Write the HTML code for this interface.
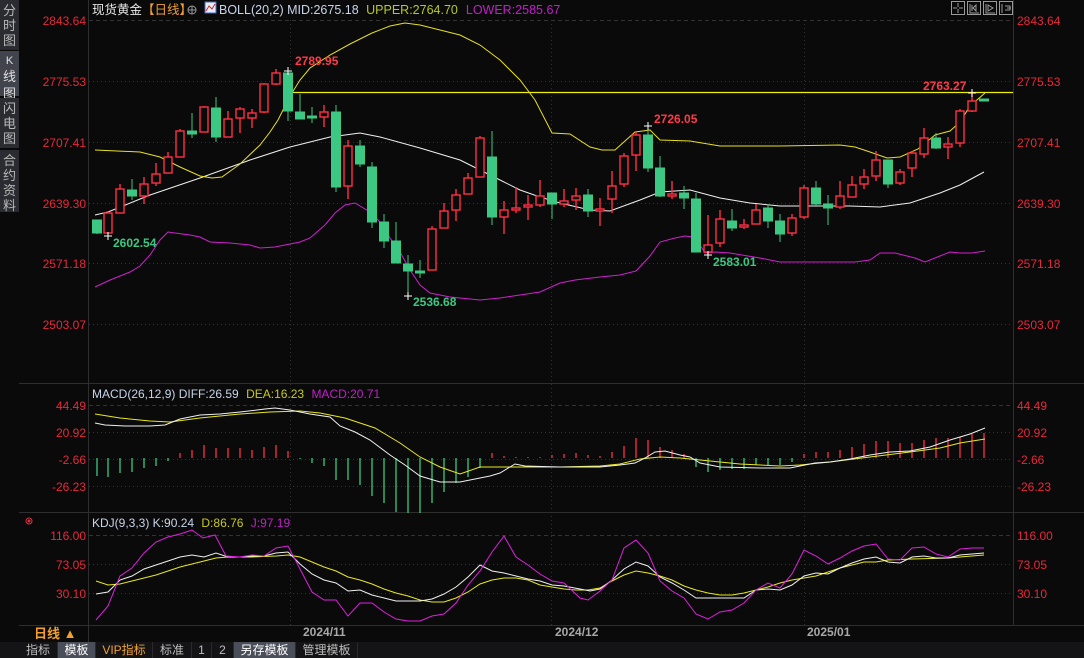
<!DOCTYPE html>
<html><head><meta charset="utf-8"><style>
*{margin:0;padding:0;box-sizing:border-box}
body{width:1084px;height:658px;background:#0a0a0a;overflow:hidden;font-family:"Liberation Sans","Noto Sans CJK SC",sans-serif;position:relative}
.side{position:absolute;left:0;top:0;width:19px;height:642px;background:#0a0a0a}
.side div{position:absolute;left:0;width:19px;background:#2a2c31;color:#b8b8b8;font-size:13px;line-height:15px;text-align:center;padding-top:3px}
.side div.sel{background:#41444c;color:#e0e0e0}
.tabs{position:absolute;left:0;top:642px;width:1084px;height:16px;background:#141416;font-size:12px;color:#bdbdbd}
.tabs span{position:absolute;top:0;height:16px;line-height:16px;text-align:center;border-right:1px solid #2a2a2a}
.tabs .s{background:#4a4e58;color:#fff}
svg{position:absolute;left:0;top:0}
</style></head><body>
<div class="side">
<div style="top:0;height:50px">分<br>时<br>图</div>
<div class="sel" style="top:51px;height:45px;font-size:11px">K<br><span style="font-size:13px">线<br>图</span></div>
<div style="top:98px;height:50px">闪<br>电<br>图</div>
<div style="top:150px;height:62px">合<br>约<br>资<br>料</div>
</div>
<svg width="1084" height="658" xmlns="http://www.w3.org/2000/svg" font-family="Liberation Sans, Noto Sans CJK SC, sans-serif">
<!-- frame lines -->
<g stroke="#2e2e2e" stroke-width="1">
<line x1="88.5" y1="0" x2="88.5" y2="642"/>
<line x1="1013.5" y1="0" x2="1013.5" y2="642"/>
<line x1="19" y1="383.5" x2="1084" y2="383.5"/>
<line x1="19" y1="512.5" x2="1084" y2="512.5"/>
<line x1="19" y1="625.5" x2="1084" y2="625.5"/>
</g>
<!-- grid -->
<g stroke="#333" stroke-width="1" stroke-dasharray="1,3">
<line x1="89" y1="20.5" x2="1013" y2="20.5" stroke-dasharray="4,3"/>
<line x1="89" y1="81.5" x2="1013" y2="81.5"/>
<line x1="89" y1="142.5" x2="1013" y2="142.5"/>
<line x1="89" y1="203.5" x2="1013" y2="203.5"/>
<line x1="89" y1="263.5" x2="1013" y2="263.5"/>
<line x1="89" y1="324.5" x2="1013" y2="324.5"/>
<line x1="89" y1="405.5" x2="1013" y2="405.5" stroke-dasharray="4,3"/>
<line x1="89" y1="432.5" x2="1013" y2="432.5"/>
<line x1="89" y1="459.5" x2="1013" y2="459.5"/>
<line x1="89" y1="486.5" x2="1013" y2="486.5"/>
<line x1="89" y1="535.5" x2="1013" y2="535.5" stroke-dasharray="4,3"/>
<line x1="89" y1="564.5" x2="1013" y2="564.5"/>
<line x1="89" y1="593.5" x2="1013" y2="593.5"/>
<line x1="290.5" y1="20" x2="290.5" y2="642"/>
<line x1="551.5" y1="20" x2="551.5" y2="642"/>
<line x1="804.5" y1="20" x2="804.5" y2="642"/>
</g>
<!-- axis labels -->
<g fill="#e8283a" font-size="12">
<g text-anchor="end">
<text x="86" y="25">2843.64</text><text x="86" y="86">2775.53</text><text x="86" y="147">2707.41</text><text x="86" y="208">2639.30</text><text x="86" y="268">2571.18</text><text x="86" y="329">2503.07</text>
<text x="86" y="410">44.49</text><text x="86" y="437">20.92</text><text x="86" y="464">-2.66</text><text x="86" y="491">-26.23</text>
<text x="86" y="540">116.00</text><text x="86" y="569">73.05</text><text x="86" y="598">30.10</text>
</g>
<text x="1017" y="25">2843.64</text><text x="1017" y="86">2775.53</text><text x="1017" y="147">2707.41</text><text x="1017" y="208">2639.30</text><text x="1017" y="268">2571.18</text><text x="1017" y="329">2503.07</text>
<text x="1017" y="410">44.49</text><text x="1017" y="437">20.92</text><text x="1017" y="464">-2.66</text><text x="1017" y="491">-26.23</text>
<text x="1017" y="540">116.00</text><text x="1017" y="569">73.05</text><text x="1017" y="598">30.10</text>
</g>
<!-- header -->
<text x="92" y="14" font-size="12.5"><tspan fill="#e8e8e8">现货黄金</tspan><tspan fill="#f0a030">【日线】</tspan></text>
<circle cx="192" cy="10" r="4" fill="none" stroke="#999"/><line x1="188" y1="10" x2="196" y2="10" stroke="#999"/><line x1="192" y1="6" x2="192" y2="14" stroke="#999"/>
<rect x="205" y="2" width="11" height="11" fill="#e8eef8" stroke="#4466cc"/><polyline points="206,11 209,6 212,9 215,4" fill="none" stroke="#d02020"/>
<text x="219" y="14" font-size="12.5"><tspan fill="#c8d4ea">BOLL(20,2) MID:2675.18 </tspan><tspan fill="#b8c820" dx="4">UPPER:2764.70</tspan><tspan fill="#c020c8" dx="8">LOWER:2585.67</tspan></text>
<text x="92" y="398" font-size="12"><tspan fill="#c8d4ea">MACD(26,12,9) DIFF:26.59 </tspan><tspan fill="#c8c820" dx="4">DEA:16.23 </tspan><tspan fill="#c020c8" dx="4">MACD:20.71</tspan></text>
<text x="92" y="527" font-size="12"><tspan fill="#c8d4ea">KDJ(9,3,3) K:90.24 </tspan><tspan fill="#c8c820" dx="4">D:86.76 </tspan><tspan fill="#c020c8" dx="4">J:97.19</tspan></text>
<g fill="none" stroke="#e03040"><circle cx="29" cy="521" r="3"/><circle cx="29" cy="521" r="1" fill="#e03040"/></g>
<!-- top right icons -->
<g fill="none" stroke="#9a9a9a">
<rect x="951.5" y="1.5" width="13" height="13"/><rect x="967.5" y="1.5" width="13" height="13"/><rect x="983.5" y="1.5" width="13" height="13"/><rect x="999.5" y="1.5" width="13" height="13"/>
<path d="M958 3v4M958 9v4M953 8h4M959 8h4M970 4v9h9M972 5v6M976 5v6l-3-3zM986 4v9h9M988 5v6l5-3zM1002 4v9M1005 6h5v4h-5M1007 8h4"/>
</g>
<!-- BOLL lines -->
<polyline fill="none" stroke="#f0f0f0" stroke-width="1" points="95,215 108,212 150,195 200,178 250,160 290,147 330,137 360,133 380,137 420,148 460,160 500,180 520,190 540,197 560,203 590,210 610,211 640,200 660,192 690,190 720,198 750,203 780,206 800,206 850,206 880,207 910,203 940,193 960,185 984,172"/>
<polyline fill="none" stroke="#e8e020" stroke-width="1" points="95,150 140,152 160,157 180,167 200,176 212,178 222,177 240,164 260,145 270,132 278,120 290,96 300,80 310,68 330,55 350,44 372,33 390,26 405,23 420,25 440,30 460,35 480,45 500,60 520,80 535,100 552,133 570,134 590,147 602,150 615,150 635,132 650,130 660,140 690,141 720,146 780,146 840,145 855,147 870,152 887,158 900,157 918,149 935,135 950,131 960,122 970,106 985,93"/>
<polyline fill="none" stroke="#d020d0" stroke-width="1" points="95,287 110,280 130,272 140,266 150,255 160,240 168,232 175,233 190,235 200,237 210,242 230,243 250,245 260,248 275,247 290,244 300,242 310,238 325,225 335,213 345,205 355,203 370,212 380,222 390,238 400,252 410,270 420,285 430,293 450,297 480,300 500,298 520,295 540,292 560,283 575,280 600,277 620,275 636,271 650,256 660,242 675,238 685,236 693,237 700,245 705,253 715,252 730,253 760,258 780,262 830,262 855,262 870,260 880,253 895,253 915,258 925,262 940,256 950,252 960,253 972,253 985,251"/>
<line x1="288" y1="92.5" x2="1013" y2="92.5" stroke="#f0f000" stroke-width="1.3"/>
<!-- green candles -->
<g stroke="#3cc882" fill="#3cc882">
<line x1="97" y1="220" x2="97" y2="234"/><rect x="92.5" y="220" width="9" height="13"/>
<line x1="132" y1="179" x2="132" y2="200"/><rect x="127.5" y="190" width="9" height="6"/>
<line x1="192" y1="113" x2="192" y2="138"/><rect x="187.5" y="131" width="9" height="3"/>
<line x1="216" y1="97" x2="216" y2="142"/><rect x="211.5" y="108" width="9" height="29"/>
<line x1="288" y1="69" x2="288" y2="121"/><rect x="283.5" y="73" width="9" height="38"/>
<line x1="300" y1="94" x2="300" y2="119"/><rect x="295.5" y="112" width="9" height="7"/>
<line x1="312" y1="107" x2="312" y2="123"/><rect x="307.5" y="116" width="9" height="2"/>
<line x1="336" y1="105" x2="336" y2="192"/><rect x="331.5" y="112" width="9" height="75"/>
<line x1="360" y1="140" x2="360" y2="167"/><rect x="355.5" y="146" width="9" height="18"/>
<line x1="372" y1="162" x2="372" y2="228"/><rect x="367.5" y="167" width="9" height="55"/>
<line x1="384" y1="214" x2="384" y2="248"/><rect x="379.5" y="222" width="9" height="19"/>
<line x1="396" y1="222" x2="396" y2="263"/><rect x="391.5" y="241" width="9" height="22"/>
<line x1="408" y1="255" x2="408" y2="296"/><rect x="403.5" y="264" width="9" height="7"/>
<line x1="420" y1="260" x2="420" y2="278"/><rect x="415.5" y="271" width="9" height="2"/>
<line x1="492" y1="131" x2="492" y2="225"/><rect x="487.5" y="157" width="9" height="60"/>
<line x1="552" y1="193" x2="552" y2="219"/><rect x="547.5" y="193" width="9" height="11"/>
<line x1="588" y1="189" x2="588" y2="217"/><rect x="583.5" y="195" width="9" height="16"/>
<line x1="648" y1="125" x2="648" y2="172"/><rect x="643.5" y="135" width="9" height="33"/>
<line x1="660" y1="156" x2="660" y2="197"/><rect x="655.5" y="168" width="9" height="28"/>
<line x1="684" y1="186" x2="684" y2="209"/><rect x="679.5" y="193" width="9" height="5"/>
<line x1="696" y1="193" x2="696" y2="252"/><rect x="691.5" y="199" width="9" height="53"/>
<line x1="732" y1="209" x2="732" y2="231"/><rect x="727.5" y="221" width="9" height="7"/>
<line x1="768" y1="204" x2="768" y2="228"/><rect x="763.5" y="208" width="9" height="13"/>
<line x1="780" y1="214" x2="780" y2="242"/><rect x="775.5" y="221" width="9" height="13"/>
<line x1="816" y1="181" x2="816" y2="206"/><rect x="811.5" y="188" width="9" height="16"/>
<line x1="828" y1="195" x2="828" y2="225"/><rect x="823.5" y="204" width="9" height="4"/>
<line x1="888" y1="160" x2="888" y2="188"/><rect x="883.5" y="160" width="9" height="24"/>
<line x1="936" y1="133" x2="936" y2="149"/><rect x="931.5" y="138" width="9" height="10"/>
<rect x="979.5" y="99" width="9" height="2"/>
</g>
<!-- red candles -->
<g stroke="#ff3045" fill="#0a0a0a" stroke-width="1.4">
<line x1="108" y1="211" x2="108" y2="234"/><rect x="104" y="213" width="8" height="20"/>
<line x1="120" y1="184" x2="120" y2="213"/><rect x="116" y="189" width="8" height="24"/>
<line x1="144" y1="177" x2="144" y2="204"/><rect x="140" y="184" width="8" height="12"/>
<line x1="156" y1="163" x2="156" y2="186"/><rect x="152" y="174" width="8" height="9"/>
<line x1="168" y1="152" x2="168" y2="173"/><rect x="164" y="157" width="8" height="16"/>
<line x1="180" y1="129" x2="180" y2="157"/><rect x="176" y="131" width="8" height="26"/>
<line x1="204" y1="106" x2="204" y2="132"/><rect x="200" y="107" width="8" height="25"/>
<line x1="228" y1="111" x2="228" y2="137"/><rect x="224" y="119" width="8" height="18"/>
<line x1="240" y1="107" x2="240" y2="133"/><rect x="236" y="109" width="8" height="9"/>
<line x1="252" y1="109" x2="252" y2="128"/><rect x="248" y="113" width="8" height="5"/>
<line x1="264" y1="83" x2="264" y2="113"/><rect x="260" y="84" width="8" height="28"/>
<line x1="276" y1="69" x2="276" y2="85"/><rect x="272" y="73" width="8" height="11"/>
<line x1="324" y1="105" x2="324" y2="127"/><rect x="320" y="112" width="8" height="5"/>
<line x1="348" y1="140" x2="348" y2="199"/><rect x="344" y="146" width="8" height="40"/>
<line x1="432" y1="226" x2="432" y2="270"/><rect x="428" y="229" width="8" height="41"/>
<line x1="444" y1="203" x2="444" y2="228"/><rect x="440" y="211" width="8" height="17"/>
<line x1="456" y1="189" x2="456" y2="221"/><rect x="452" y="195" width="8" height="15"/>
<line x1="468" y1="173" x2="468" y2="194"/><rect x="464" y="178" width="8" height="16"/>
<line x1="480" y1="136" x2="480" y2="177"/><rect x="476" y="138" width="8" height="39"/>
<line x1="504" y1="201" x2="504" y2="234"/><rect x="500" y="210" width="8" height="7"/>
<line x1="516" y1="187" x2="516" y2="213"/><rect x="512" y="208" width="8" height="2"/>
<line x1="528" y1="195" x2="528" y2="220"/><rect x="524" y="205" width="8" height="2"/>
<line x1="540" y1="180" x2="540" y2="207"/><rect x="536" y="196" width="8" height="9"/>
<line x1="564" y1="189" x2="564" y2="207"/><rect x="560" y="201" width="8" height="3"/>
<line x1="576" y1="188" x2="576" y2="210"/><rect x="572" y="196" width="8" height="4"/>
<line x1="600" y1="198" x2="600" y2="226"/><rect x="596" y="209" width="8" height="2"/>
<line x1="612" y1="171" x2="612" y2="213"/><rect x="608" y="186" width="8" height="13"/>
<line x1="624" y1="153" x2="624" y2="187"/><rect x="620" y="156" width="8" height="28"/>
<line x1="636" y1="132" x2="636" y2="171"/><rect x="632" y="135" width="8" height="20"/>
<line x1="672" y1="181" x2="672" y2="199"/><rect x="668" y="194" width="8" height="2"/>
<line x1="708" y1="215" x2="708" y2="255"/><rect x="704" y="245" width="8" height="7"/>
<line x1="720" y1="210" x2="720" y2="247"/><rect x="716" y="219" width="8" height="24"/>
<line x1="744" y1="219" x2="744" y2="229"/><rect x="740" y="225" width="8" height="2"/>
<line x1="756" y1="204" x2="756" y2="224"/><rect x="752" y="210" width="8" height="14"/>
<line x1="792" y1="214" x2="792" y2="236"/><rect x="788" y="218" width="8" height="15"/>
<line x1="804" y1="185" x2="804" y2="219"/><rect x="800" y="188" width="8" height="29"/>
<line x1="840" y1="181" x2="840" y2="209"/><rect x="836" y="196" width="8" height="11"/>
<line x1="852" y1="176" x2="852" y2="197"/><rect x="848" y="185" width="8" height="12"/>
<line x1="864" y1="169" x2="864" y2="189"/><rect x="860" y="177" width="8" height="7"/>
<line x1="876" y1="151" x2="876" y2="181"/><rect x="872" y="160" width="8" height="16"/>
<line x1="900" y1="169" x2="900" y2="185"/><rect x="896" y="172" width="8" height="11"/>
<line x1="912" y1="151" x2="912" y2="177"/><rect x="908" y="153" width="8" height="15"/>
<line x1="924" y1="128" x2="924" y2="158"/><rect x="920" y="138" width="8" height="16"/>
<line x1="948" y1="137" x2="948" y2="159"/><rect x="944" y="144" width="8" height="3"/>
<line x1="960" y1="109" x2="960" y2="147"/><rect x="956" y="111" width="8" height="32"/>
<line x1="972" y1="93" x2="972" y2="112"/><rect x="968" y="101" width="8" height="10"/>
</g>
<!-- markers -->
<g stroke="#fff" stroke-width="1"><path d="M284 71h8M288 67v8M104 236h8M108 232v8M404 296h8M408 292v8M644 126h8M648 122v8M704 255h8M708 251v8M968 93h8M972 89v8"/></g>
<g font-size="12" font-weight="bold">
<text x="295" y="65" fill="#ff3a4a">2789.95</text>
<text x="113" y="247" fill="#3cc882">2602.54</text>
<text x="413" y="306" fill="#3cc882">2536.68</text>
<text x="654" y="123" fill="#ff3a4a">2726.05</text>
<text x="713" y="266" fill="#3cc882">2583.01</text>
<text x="923" y="90" fill="#ff3a4a">2763.27</text>
</g>
<!-- MACD histogram -->
<g stroke="#3cc882" stroke-width="1.3">
<path d="M97 458V476M108 458V477M120 458V473M132 458V472M144 458V468M156 458V466M168 458V461M300 458V459M312 458V463M324 458V466M336 458V480M348 458V480M360 458V485M372 458V496M384 458V503M396 458V512M408 458V513M420 458V513M432 458V503M444 458V492M456 458V483M468 458V477M480 458V468M696 458V467M708 458V472M720 458V470M732 458V469M744 458V469M756 458V465M768 458V465M780 458V465M792 458V462"/>
</g>
<g stroke="#ff3045" stroke-width="1.3">
<path d="M180 458V453M192 458V450M204 458V445M216 458V448M228 458V448M240 458V448M252 458V450M264 458V447M276 458V445M288 458V451M492 458V453M504 458V456M516 458V457M528 458V457M540 458V457M552 458V455M564 458V454M576 458V453M588 458V455M600 458V456M612 458V452M624 458V446M636 458V438M648 458V440M660 458V447M672 458V450M684 458V454M804 458V454M816 458V452M828 458V452M840 458V450M852 458V447M864 458V444M876 458V441M888 458V441M900 458V443M912 458V443M924 458V440M936 458V438M948 458V438M960 458V437M972 458V434M984 458V433"/>
</g>
<polyline fill="none" stroke="#e8e820" points="95,414 120,418 150,421 170,422 200,418 240,414 270,412 300,411 320,413 345,418 375,428 400,443 420,457 440,467 460,474 480,467 490,467 520,467 560,467 600,466 620,464 640,459 660,457 680,458 700,460 740,464 780,466 800,465 830,462 870,457 910,452 940,448 960,443 985,439"/>
<polyline fill="none" stroke="#f0f0f0" points="95,423 105,425 125,426 150,426 165,425 180,419 200,415 220,414 240,412 265,409 275,408 290,410 310,414 330,417 340,426 355,432 370,440 390,455 405,465 420,476 440,482 460,482 470,480 490,476 500,473 515,464 525,466 560,467 600,467 620,465 635,463 645,458 655,452 665,451 680,455 690,457 700,463 720,467 760,468 790,468 800,466 815,463 830,462 850,459 870,455 890,452 910,451 930,447 950,440 970,434 985,428"/>
<!-- KDJ -->
<polyline fill="none" stroke="#e8e820" points="96,581 108,585 120,584 132,581 144,578 156,575 168,571 180,567 192,564 204,561 216,558 228,557 252,557 276,556 288,555 300,557 312,562 324,567 336,571 348,577 360,580 372,584 384,589 396,593 408,596 420,600 432,602 444,602 456,598 468,592 480,584 492,580 504,578 516,578 528,580 540,585 552,587 564,589 576,590 588,590 600,588 612,581 624,575 636,571 648,573 660,576 672,580 684,586 696,590 708,593 720,595 732,595 744,593 756,590 768,587 780,583 792,580 804,578 816,576 828,572 840,568 852,565 864,562 876,562 888,560 912,559 948,558 972,556 984,555"/>
<polyline fill="none" stroke="#f0f0f0" points="96,594 108,592 120,580 132,576 144,569 156,565 168,561 180,557 192,555 204,557 216,553 228,557 240,557 252,556 264,556 276,553 288,552 300,564 312,574 324,580 336,583 348,591 360,590 372,595 384,598 396,601 420,601 432,599 444,594 456,587 468,577 480,565 492,571 504,573 516,576 528,579 540,581 552,585 564,586 580,589 590,591 600,589 612,580 624,569 636,562 648,566 660,577 672,583 684,590 696,598 744,598 756,590 768,589 780,590 792,585 804,576 816,573 828,574 840,568 852,563 864,559 876,557 888,562 900,563 912,557 924,556 936,558 948,558 960,555 972,554 984,553"/>
<polyline fill="none" stroke="#e020e0" points="96,620 108,606 120,576 132,568 144,553 156,542 168,537 180,534 192,530 203,538 215,535 226,556 240,557 252,555 264,556 276,548 288,546 300,569 312,592 324,600 336,600 348,616 360,603 372,603 384,612 396,619 408,621 420,621 432,616 444,614 456,603 468,585 480,571 492,552 504,536 516,557 528,565 540,574 552,581 564,583 580,598 588,600 600,591 612,580 624,548 636,540 648,553 660,581 672,591 684,598 696,614 708,619 720,612 732,610 744,603 756,590 768,583 780,588 792,574 804,550 816,556 828,564 840,558 852,551 864,546 876,544 888,559 900,560 912,548 924,547 936,554 948,557 960,549 972,548 984,548"/>
<!-- date axis -->
<rect x="19" y="626" width="1065" height="16" fill="#0a0a0a"/>
<line x1="88.5" y1="626" x2="88.5" y2="642" stroke="#2e2e2e"/>
<text x="34" y="638" font-size="13" font-weight="bold" fill="#f0a030">日线 ▲</text>
<g font-size="12" fill="#a8a8a8" font-weight="bold"><text x="303" y="636">2024/11</text><text x="555" y="636">2024/12</text><text x="807" y="636">2025/01</text></g>
</svg>
<div class="tabs">
<span style="left:19px;width:39px">指标</span>
<span class="s" style="left:58px;width:38px">模板</span>
<span style="left:96px;width:57px;color:#f0a030">VIP指标</span>
<span style="left:153px;width:39px">标准</span>
<span style="left:192px;width:20px">1</span>
<span style="left:212px;width:22px">2</span>
<span class="s" style="left:234px;width:62px">另存模板</span>
<span style="left:296px;width:62px">管理模板</span>
</div>
</body></html>
